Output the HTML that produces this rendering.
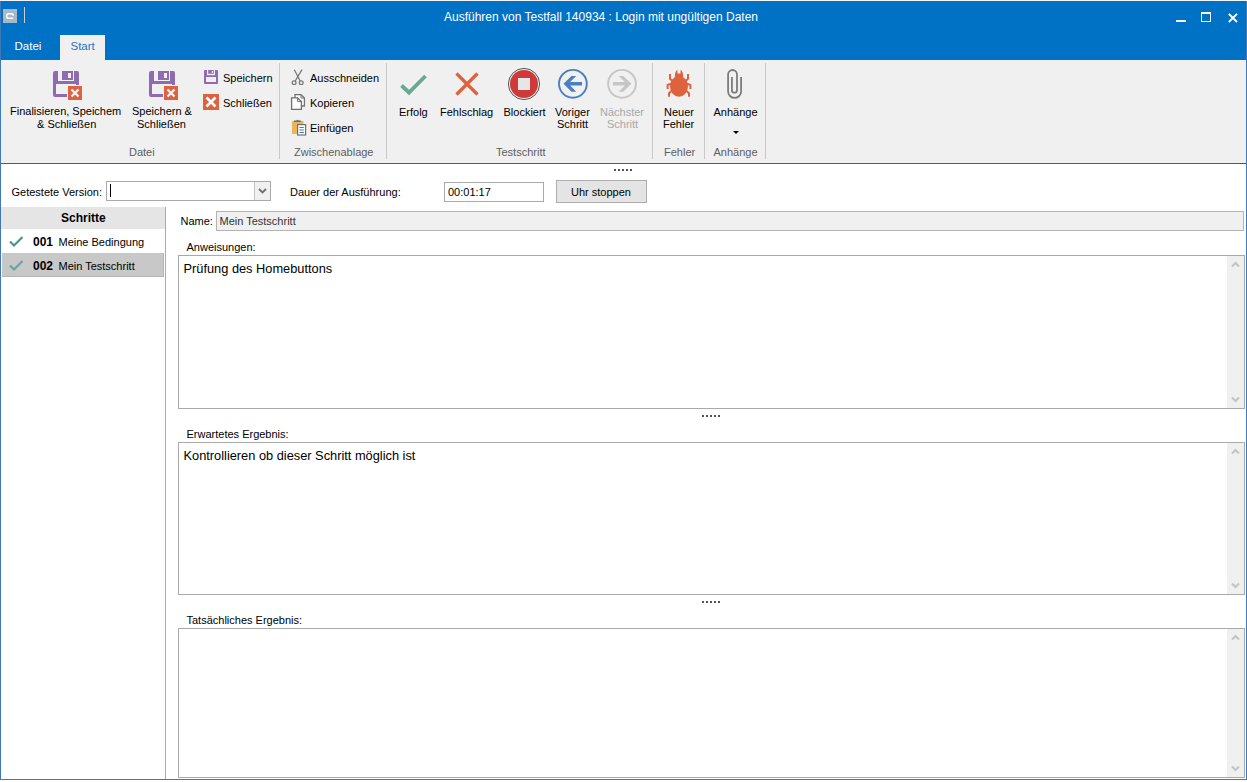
<!DOCTYPE html>
<html><head><meta charset="utf-8"><style>
html,body{margin:0;padding:0;}
body{width:1247px;height:782px;position:relative;overflow:hidden;background:#fff;font-family:"Liberation Sans",sans-serif;}
.t{position:absolute;white-space:nowrap;line-height:1;}
</style></head><body>
<div style="position:absolute;left:0px;top:0px;width:1247px;height:1px;background:#f4f4f4"></div>
<div style="position:absolute;left:0px;top:1px;width:1247px;height:59px;background:#0072C6"></div>
<div style="position:absolute;left:3px;top:9px;width:14px;height:14px;background:#a7b8cb"></div>
<svg style="position:absolute;left:3px;top:9px" width="14" height="14"><path d="M10.2 6.7 Q10.2 4.7 8.4 4.7 H5.4 Q3.7 4.7 3.7 7 Q3.7 9.3 5.4 9.3 H10.2" fill="none" stroke="#fff" stroke-width="1.6"/></svg>
<div style="position:absolute;left:24px;top:7px;width:1px;height:16px;background:#c9ced4"></div>
<div class="t" style="left:444.00px;top:10.84px;font-size:12px;color:#fff;font-weight:normal;text-align:left;">Ausführen von Testfall 140934 : Login mit ungültigen Daten</div>
<div style="position:absolute;left:1176px;top:20px;width:10px;height:2px;background:#fff"></div>
<div style="position:absolute;left:1201px;top:12px;width:10px;height:10px;border:1px solid #fff;border-top-width:2px;box-sizing:border-box"></div>
<svg style="position:absolute;left:1227px;top:12px" width="12" height="12"><path d="M1.8 1.8 L10 10 M10 1.8 L1.8 10" stroke="#fff" stroke-width="1.9"/></svg>
<div class="t" style="left:14.50px;top:41.07px;font-size:11.5px;color:#fff;font-weight:normal;text-align:left;">Datei</div>
<div style="position:absolute;left:60px;top:35px;width:45px;height:25px;background:#F0F0F0"></div>
<div class="t" style="left:70.50px;top:41.07px;font-size:11.5px;color:#2a72c0;font-weight:normal;text-align:left;">Start</div>
<div style="position:absolute;left:0px;top:60px;width:1247px;height:103px;background:#F0F0F0"></div>
<div style="position:absolute;left:0px;top:163px;width:1247px;height:1px;background:#0072C6"></div>
<div style="position:absolute;left:279px;top:63px;width:1px;height:96px;background:#c9c9c9"></div>
<div style="position:absolute;left:386px;top:63px;width:1px;height:96px;background:#c9c9c9"></div>
<div style="position:absolute;left:652px;top:63px;width:1px;height:96px;background:#c9c9c9"></div>
<div style="position:absolute;left:704px;top:63px;width:1px;height:96px;background:#c9c9c9"></div>
<div style="position:absolute;left:765px;top:63px;width:1px;height:96px;background:#c9c9c9"></div>
<svg style="position:absolute;left:53px;top:71px" width="32" height="32" viewBox="0 0 32 32">
<path d="M0 2 Q0 0 2 0 H24 Q26 0 26 2 V26 H2 Q0 26 0 24Z" fill="#8f6bb1"/>
<rect x="5" y="0" width="16" height="10" fill="#F0F0F0"/>
<rect x="9" y="0" width="11" height="9" fill="#8f6bb1"/>
<rect x="15" y="2" width="3" height="5" fill="#F0F0F0"/>
<rect x="3" y="13" width="20" height="10" fill="#F0F0F0"/>
<rect x="14" y="14" width="16" height="16" fill="#F0F0F0"/>
<rect x="15" y="15" width="14" height="14" fill="#dd6340"/>
<path d="M18.5 18.5 L25.5 25.5 M25.5 18.5 L18.5 25.5" stroke="#f2f2f2" stroke-width="2.4"/>
</svg>
<svg style="position:absolute;left:149px;top:71px" width="32" height="32" viewBox="0 0 32 32">
<path d="M0 2 Q0 0 2 0 H24 Q26 0 26 2 V26 H2 Q0 26 0 24Z" fill="#8f6bb1"/>
<rect x="5" y="0" width="16" height="10" fill="#F0F0F0"/>
<rect x="9" y="0" width="11" height="9" fill="#8f6bb1"/>
<rect x="15" y="2" width="3" height="5" fill="#F0F0F0"/>
<rect x="3" y="13" width="20" height="10" fill="#F0F0F0"/>
<rect x="14" y="14" width="16" height="16" fill="#F0F0F0"/>
<rect x="15" y="15" width="14" height="14" fill="#dd6340"/>
<path d="M18.5 18.5 L25.5 25.5 M25.5 18.5 L18.5 25.5" stroke="#f2f2f2" stroke-width="2.4"/>
</svg>
<div class="t" style="left:10.00px;top:105.69px;font-size:11px;color:#000;font-weight:normal;text-align:left;">Finalisieren, Speichem</div>
<div class="t" style="left:37.00px;top:118.69px;font-size:11px;color:#000;font-weight:normal;text-align:left;">&amp; Schließen</div>
<div class="t" style="left:132.00px;top:105.69px;font-size:11px;color:#000;font-weight:normal;text-align:left;">Speichern &amp;</div>
<div class="t" style="left:137.00px;top:118.69px;font-size:11px;color:#000;font-weight:normal;text-align:left;">Schließen</div>
<div class="t" style="left:129.00px;top:147.19px;font-size:11px;color:#5e5e5e;font-weight:normal;text-align:left;">Datei</div>
<svg style="position:absolute;left:203px;top:69px" width="16" height="16" viewBox="0 0 16 16">
<path d="M1 2 Q1 1 2 1 H14 Q15 1 15 2 V14 Q15 15 14 15 H2 Q1 15 1 14Z" fill="#8f6bb1"/>
<rect x="3" y="8" width="10" height="5" fill="#F0F0F0"/>
<rect x="4" y="1" width="8" height="5.2" fill="#F0F0F0"/>
<rect x="5.2" y="1" width="5.7" height="3.7" fill="#8f6bb1"/>
<rect x="8.8" y="1.9" width="1.3" height="2" fill="#F0F0F0"/>
</svg>
<div class="t" style="left:223.00px;top:72.69px;font-size:11px;color:#000;font-weight:normal;text-align:left;">Speichern</div>
<svg style="position:absolute;left:203px;top:94px" width="16" height="16" viewBox="0 0 16 16">
<rect x="0" y="0" width="16" height="16" fill="#dd6340"/>
<path d="M3.5 3.5 L12.5 12.5 M12.5 3.5 L3.5 12.5" stroke="#fff" stroke-width="2.6"/>
</svg>
<div class="t" style="left:223.00px;top:97.69px;font-size:11px;color:#000;font-weight:normal;text-align:left;">Schließen</div>
<svg style="position:absolute;left:290px;top:69px" width="16" height="16" viewBox="0 0 16 16" fill="none" stroke="#787878" stroke-width="1.3">
<circle cx="4.1" cy="13.8" r="1.9"/><circle cx="11.2" cy="13.8" r="1.9"/>
<path d="M4.3 0.7 L10.2 12 M12 0.7 L5.2 12"/>
</svg>
<div class="t" style="left:310.00px;top:72.69px;font-size:11px;color:#000;font-weight:normal;text-align:left;">Ausschneiden</div>
<svg style="position:absolute;left:290px;top:93px" width="17" height="18" viewBox="0 0 17 18" fill="#fff" stroke="#707070" stroke-width="1.3">
<path d="M5 1.6 H11 L14.4 5 V13 H5Z"/><path d="M11 1.6 V5 H14.4" fill="none" stroke-width="1"/>
<path d="M1.6 4.8 H7.6 L11.4 8.6 V16.4 H1.6Z"/><path d="M7.6 4.8 V8.6 H11.4" fill="none" stroke-width="1"/>
</svg>
<div class="t" style="left:310.00px;top:97.69px;font-size:11px;color:#000;font-weight:normal;text-align:left;">Kopieren</div>
<svg style="position:absolute;left:290px;top:118px" width="17" height="18" viewBox="0 0 17 18">
<rect x="2" y="3" width="11.5" height="13" fill="#eab559"/>
<path d="M4 4 V2.5 H6.5 Q7.5 0.8 8.5 2.5 H11 V4Z" fill="#6e6e6e"/>
<rect x="7.6" y="6.6" width="8" height="10.4" fill="#fff" stroke="#707070" stroke-width="1.2"/>
<path d="M9.5 9.5 H13.8 M9.5 12 H13.8 M9.5 14.5 H13.8" stroke="#3d78c2" stroke-width="1.1"/>
</svg>
<div class="t" style="left:310.00px;top:122.69px;font-size:11px;color:#000;font-weight:normal;text-align:left;">Einfügen</div>
<div class="t" style="left:294.00px;top:147.19px;font-size:11px;color:#5e5e5e;font-weight:normal;text-align:left;">Zwischenablage</div>
<svg style="position:absolute;left:398px;top:70px" width="32" height="28" viewBox="0 0 32 28">
<path d="M3.5 15.5 L11 22.5 L27.5 6" fill="none" stroke="#6aa893" stroke-width="3.8"/>
</svg>
<div class="t" style="left:399.00px;top:106.69px;font-size:11px;color:#000;font-weight:normal;text-align:left;">Erfolg</div>
<svg style="position:absolute;left:452px;top:70px" width="28" height="28" viewBox="0 0 28 28">
<path d="M4.5 3.5 L25.5 24.5 M25.5 3.5 L4.5 24.5" stroke="#df623e" stroke-width="3.2"/>
</svg>
<div class="t" style="left:440.00px;top:106.69px;font-size:11px;color:#000;font-weight:normal;text-align:left;">Fehlschlag</div>
<svg style="position:absolute;left:507px;top:67px" width="34" height="34" viewBox="0 0 34 34">
<circle cx="17" cy="17" r="15.6" fill="none" stroke="#555" stroke-width="1"/>
<circle cx="17" cy="17" r="14" fill="#d0393a"/>
<rect x="11" y="11" width="12" height="12" fill="#e6e6e6"/>
</svg>
<div class="t" style="left:503.50px;top:106.69px;font-size:11px;color:#000;font-weight:normal;text-align:left;">Blockiert</div>
<svg style="position:absolute;left:552px;top:64px" width="42" height="40" viewBox="0 0 42 40">
<circle cx="20.9" cy="19.8" r="13.9" fill="none" stroke="#4a7fc1" stroke-width="1.9"/>
<path d="M11.5 19.8 L19.5 11.9 H24.2 L18.1 18 H30 V21.6 H18.1 L24.2 27.8 H19.5Z" fill="#4a7fc1"/>
</svg>
<div class="t" style="left:555.00px;top:106.69px;font-size:11px;color:#000;font-weight:normal;text-align:left;">Voriger</div>
<div class="t" style="left:557.00px;top:118.69px;font-size:11px;color:#000;font-weight:normal;text-align:left;">Schritt</div>
<svg style="position:absolute;left:601px;top:64px" width="42" height="40" viewBox="0 0 42 40">
<circle cx="21" cy="19.8" r="13.9" fill="none" stroke="#c6c6c6" stroke-width="1.9"/>
<path d="M30.4 19.8 L22.4 11.9 H17.7 L23.8 18 H11.9 V21.6 H23.8 L17.7 27.8 H22.4Z" fill="#c6c6c6"/>
</svg>
<div class="t" style="left:600.00px;top:106.69px;font-size:11px;color:#a8a8a8;font-weight:normal;text-align:left;">Nächster</div>
<div class="t" style="left:607.00px;top:118.69px;font-size:11px;color:#a8a8a8;font-weight:normal;text-align:left;">Schritt</div>
<svg style="position:absolute;left:658px;top:64px" width="42" height="40" viewBox="0 0 42 40">
<ellipse cx="21" cy="22.4" rx="9" ry="10.3" fill="#df623e"/>
<path d="M16.8 13 Q16.8 7 19.5 6 V9.6 H22.5 V6 Q25.2 7 25.2 13Z" fill="#df623e"/>
<g fill="none" stroke="#df623e" stroke-width="2">
<path d="M12 10 V14.8 L15 17.5 M30 10 V14.8 L27 17.5"/>
<path d="M13 19.8 L9.6 21 V25 M29 19.8 L32.4 21 V25"/>
<path d="M13.5 27 L11 29.3 V32.8 M28.5 27 L31 29.3 V32.8"/>
</g>
</svg>
<div class="t" style="left:664.00px;top:106.69px;font-size:11px;color:#000;font-weight:normal;text-align:left;">Neuer</div>
<div class="t" style="left:663.00px;top:118.69px;font-size:11px;color:#000;font-weight:normal;text-align:left;">Fehler</div>
<div class="t" style="left:664.00px;top:147.19px;font-size:11px;color:#5e5e5e;font-weight:normal;text-align:left;">Fehler</div>
<svg style="position:absolute;left:718px;top:64px" width="32" height="40" viewBox="0 0 32 40">
<path d="M23.1 13 V27.4 A6.5 6.5 0 0 1 10.1 27.4 V10.45 A4.45 4.45 0 0 1 19 10.45 V26.15 A2.55 2.55 0 0 1 13.9 26.15 V13" fill="none" stroke="#7c7c7c" stroke-width="1.8"/>
</svg>
<div class="t" style="left:713.50px;top:106.69px;font-size:11px;color:#000;font-weight:normal;text-align:left;">Anhänge</div>
<svg style="position:absolute;left:733px;top:131px" width="7" height="4"><path d="M0 0 H6 L3 3Z" fill="#000"/></svg>
<div class="t" style="left:496.00px;top:147.19px;font-size:11px;color:#5e5e5e;font-weight:normal;text-align:left;">Testschritt</div>
<div class="t" style="left:713.50px;top:147.19px;font-size:11px;color:#5e5e5e;font-weight:normal;text-align:left;">Anhänge</div>
<div style="position:absolute;left:614px;top:169px;width:2px;height:2px;background:#555"></div>
<div style="position:absolute;left:618px;top:169px;width:2px;height:2px;background:#555"></div>
<div style="position:absolute;left:622px;top:169px;width:2px;height:2px;background:#555"></div>
<div style="position:absolute;left:626px;top:169px;width:2px;height:2px;background:#555"></div>
<div style="position:absolute;left:630px;top:169px;width:2px;height:2px;background:#555"></div>
<div style="position:absolute;left:0px;top:1px;width:1px;height:779px;background:#4079b8"></div>
<div style="position:absolute;left:1246px;top:1px;width:1px;height:779px;background:#4079b8"></div>
<div style="position:absolute;left:0px;top:779px;width:1247px;height:1px;background:#4079b8"></div>
<div class="t" style="left:11.50px;top:186.69px;font-size:11px;color:#000;font-weight:normal;text-align:left;">Getestete Version:</div>
<div style="position:absolute;left:106px;top:181px;width:165px;height:20px;border:1px solid #a9a9a9;box-sizing:border-box;background:#fff"></div>
<div style="position:absolute;left:254px;top:182px;width:16px;height:18px;background:#f0f0f0;border-left:1px solid #c4c4c4;box-sizing:border-box"></div>
<svg style="position:absolute;left:258px;top:188px" width="9" height="6"><path d="M1 1 L4.5 4.5 L8 1" fill="none" stroke="#707070" stroke-width="1.8"/></svg>
<div style="position:absolute;left:110px;top:184px;width:1px;height:13px;background:#000"></div>
<div class="t" style="left:290.00px;top:186.69px;font-size:11px;color:#000;font-weight:normal;text-align:left;">Dauer der Ausführung:</div>
<div style="position:absolute;left:444px;top:182px;width:100px;height:20px;border:1px solid #a9a9a9;box-sizing:border-box;background:#fff"></div>
<div class="t" style="left:448.00px;top:186.69px;font-size:11px;color:#000;font-weight:normal;text-align:left;">00:01:17</div>
<div style="position:absolute;left:556px;top:180px;width:91px;height:23px;border:1px solid #adadad;box-sizing:border-box;background:#e4e4e4"></div>
<div class="t" style="left:571.00px;top:186.69px;font-size:11px;color:#000;font-weight:normal;text-align:left;">Uhr stoppen</div>
<div style="position:absolute;left:1px;top:207px;width:164px;height:22px;background:#e5e5e5"></div>
<div class="t" style="left:61.00px;top:211.84px;font-size:12px;color:#000;font-weight:bold;text-align:left;">Schritte</div>
<svg style="position:absolute;left:9px;top:235px" width="16" height="14"><path d="M1 6.5 L5 10.5 L13.5 2" fill="none" stroke="#50948e" stroke-width="2.2"/></svg>
<div class="t" style="left:33.00px;top:235.84px;font-size:12px;color:#000;font-weight:bold;text-align:left;">001</div>
<div class="t" style="left:58.50px;top:236.69px;font-size:11px;color:#000;font-weight:normal;text-align:left;">Meine Bedingung</div>
<div style="position:absolute;left:2px;top:253px;width:162px;height:24px;background:#c8c8c8;border-right:1px solid #b4b4b4;border-bottom:1px solid #b4b4b4;box-sizing:border-box"></div>
<svg style="position:absolute;left:9px;top:259px" width="16" height="14"><path d="M1 6.5 L5 10.5 L13.5 2" fill="none" stroke="#6aa3a0" stroke-width="2.2"/></svg>
<div class="t" style="left:33.00px;top:259.84px;font-size:12px;color:#000;font-weight:bold;text-align:left;">002</div>
<div class="t" style="left:58.50px;top:260.69px;font-size:11px;color:#000;font-weight:normal;text-align:left;">Mein Testschritt</div>
<div style="position:absolute;left:165px;top:207px;width:1px;height:572px;background:#aaaaaa"></div>
<div class="t" style="left:180.50px;top:215.69px;font-size:11px;color:#000;font-weight:normal;text-align:left;">Name:</div>
<div style="position:absolute;left:216px;top:211px;width:1028px;height:20px;border:1px solid #b4b4b4;box-sizing:border-box;background:#f0f0f0"></div>
<div class="t" style="left:219.50px;top:215.69px;font-size:11px;color:#333;font-weight:normal;text-align:left;">Mein Testschritt</div>
<div class="t" style="left:186.50px;top:241.69px;font-size:11px;color:#000;font-weight:normal;text-align:left;">Anweisungen:</div>
<div style="position:absolute;left:178px;top:255px;width:1067px;height:154px;border:1px solid #a9a9a9;box-sizing:border-box;background:#fff"></div>
<div style="position:absolute;left:1227px;top:256px;width:17px;height:152px;background:#f0f0f0"></div>
<svg style="position:absolute;left:1231px;top:261px" width="9" height="7"><path d="M1 5.5 L4.5 2 L8 5.5" fill="none" stroke="#c4c4c4" stroke-width="2.1"/></svg>
<svg style="position:absolute;left:1231px;top:396px" width="9" height="7"><path d="M1 1.5 L4.5 5 L8 1.5" fill="none" stroke="#c4c4c4" stroke-width="2.1"/></svg>
<div class="t" style="left:183.50px;top:262.96px;font-size:12.8px;color:#000;font-weight:normal;text-align:left;">Prüfung des Homebuttons</div>
<div style="position:absolute;left:702px;top:415px;width:2px;height:2px;background:#555"></div>
<div style="position:absolute;left:706px;top:415px;width:2px;height:2px;background:#555"></div>
<div style="position:absolute;left:710px;top:415px;width:2px;height:2px;background:#555"></div>
<div style="position:absolute;left:714px;top:415px;width:2px;height:2px;background:#555"></div>
<div style="position:absolute;left:718px;top:415px;width:2px;height:2px;background:#555"></div>
<div class="t" style="left:186.50px;top:428.69px;font-size:11px;color:#000;font-weight:normal;text-align:left;">Erwartetes Ergebnis:</div>
<div style="position:absolute;left:178px;top:442px;width:1067px;height:153px;border:1px solid #a9a9a9;box-sizing:border-box;background:#fff"></div>
<div style="position:absolute;left:1227px;top:443px;width:17px;height:151px;background:#f0f0f0"></div>
<svg style="position:absolute;left:1231px;top:448px" width="9" height="7"><path d="M1 5.5 L4.5 2 L8 5.5" fill="none" stroke="#c4c4c4" stroke-width="2.1"/></svg>
<svg style="position:absolute;left:1231px;top:582px" width="9" height="7"><path d="M1 1.5 L4.5 5 L8 1.5" fill="none" stroke="#c4c4c4" stroke-width="2.1"/></svg>
<div class="t" style="left:183.50px;top:449.96px;font-size:12.8px;color:#000;font-weight:normal;text-align:left;">Kontrollieren ob dieser Schritt möglich ist</div>
<div style="position:absolute;left:702px;top:601px;width:2px;height:2px;background:#555"></div>
<div style="position:absolute;left:706px;top:601px;width:2px;height:2px;background:#555"></div>
<div style="position:absolute;left:710px;top:601px;width:2px;height:2px;background:#555"></div>
<div style="position:absolute;left:714px;top:601px;width:2px;height:2px;background:#555"></div>
<div style="position:absolute;left:718px;top:601px;width:2px;height:2px;background:#555"></div>
<div class="t" style="left:186.50px;top:614.69px;font-size:11px;color:#000;font-weight:normal;text-align:left;">Tatsächliches Ergebnis:</div>
<div style="position:absolute;left:178px;top:628px;width:1067px;height:150px;border:1px solid #a9a9a9;box-sizing:border-box;background:#fff"></div>
<div style="position:absolute;left:1227px;top:629px;width:17px;height:148px;background:#f0f0f0"></div>
<svg style="position:absolute;left:1231px;top:634px" width="9" height="7"><path d="M1 5.5 L4.5 2 L8 5.5" fill="none" stroke="#c4c4c4" stroke-width="2.1"/></svg>
<svg style="position:absolute;left:1231px;top:765px" width="9" height="7"><path d="M1 1.5 L4.5 5 L8 1.5" fill="none" stroke="#c4c4c4" stroke-width="2.1"/></svg>
</body></html>
